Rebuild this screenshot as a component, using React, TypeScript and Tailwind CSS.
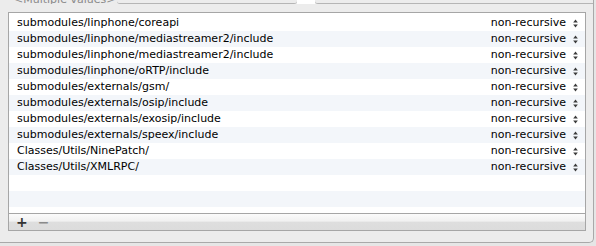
const paths = [
  "submodules/linphone/coreapi",
  "submodules/linphone/mediastreamer2/include",
  "submodules/linphone/mediastreamer2/include",
  "submodules/linphone/oRTP/include",
  "submodules/externals/gsm/",
  "submodules/externals/osip/include",
  "submodules/externals/exosip/include",
  "submodules/externals/speex/include",
  "Classes/Utils/NinePatch/",
  "Classes/Utils/XMLRPC/",
];

function UpDown() {
  return (
    <svg width="5" height="9" viewBox="0 0 5 9" className="shrink-0">
      <path d="M2.5 0.5 L4.8 3.5 L0.2 3.5 Z" fill="#3a3a3a" />
      <path d="M2.5 8.5 L4.8 5.5 L0.2 5.5 Z" fill="#3a3a3a" />
    </svg>
  );
}

export default function App() {
  const rows = [...paths.map((p) => ({ path: p })), ...Array.from({ length: 3 }, () => ({ path: "" }))];

  return (
    <div className="h-[246px] w-[596px] overflow-hidden bg-[#e6e6e6] font-['DejaVu_Sans',sans-serif] text-[11px] text-black">
      <div className="flex h-[243px] w-[594px] flex-col rounded-br-[5px] border-r border-b border-[#a9a9a9] bg-[#ececec]">
        {/* cut-off header strip */}
        <div className="flex h-[4px] items-end overflow-hidden">
          <span className="-mb-[1px] ml-[14px] text-[11px] leading-none text-[#8a8a8a]">&lt;Multiple values&gt;</span>
          <div className="ml-[2px] h-[4px] w-[180px] rounded-b-[3px] border-b border-[#b5b5b5]" />
          <div className="h-[4px] w-[18px] bg-white" />
          <div className="h-[4px] flex-1 rounded-bl-[3px] border-b border-[#b5b5b5]" />
        </div>

        <div className="ml-[8px] mt-[8px] flex w-[578px] flex-col border border-[#a6a6a6] bg-white">
          <div className="flex h-[200px] flex-col overflow-hidden pt-[2px]">
            {rows.map((r, i) => (
              <div
                key={i}
                className={`flex h-[16px] shrink-0 items-center pl-[8px] pr-[7px] ${i % 2 === 1 ? "bg-[#f3f6fa]" : "bg-white"}`}
              >
                <span className="flex-1 truncate">{r.path}</span>
                {r.path && (
                  <>
                    <span className="mr-[7px]">non-recursive</span>
                    <UpDown />
                  </>
                )}
              </div>
            ))}
          </div>
          <div className="flex h-[17px] items-center gap-[10px] border-t border-[#a6a6a6] bg-[linear-gradient(#fbfbfb_0%,#f1f1f1_45%,#dedede_50%,#dcdcdc_100%)] pl-[7px]">
            <span className="text-[14px] font-bold leading-none text-[#333]">+</span>
            <span className="text-[14px] font-bold leading-none text-[#8a8a8a]">−</span>
          </div>
        </div>
      </div>
    </div>
  );
}
